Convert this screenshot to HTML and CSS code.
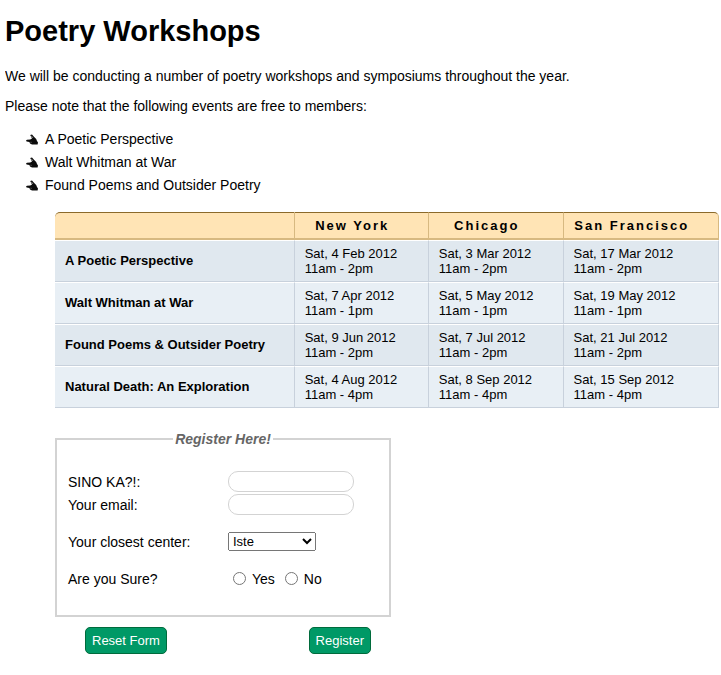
FILE: index.html
```html
<!DOCTYPE html>
<html lang="en">
<head>
<meta charset="utf-8">
<title>Poetry Workshops</title>
<link rel="stylesheet" href="styles.css">
</head>
<body>
<svg class="sprite" aria-hidden="true">
  <symbol id="hand" viewBox="0 0 12 12">
    <path d="M4.2 1 L6 0.6 L8.2 3 L10.2 5 L11 7 L12 8.6 L11.6 10.6 L6 10.4 L4 9.4 L3.4 8 L0.6 7.6 L0 6.6 L1 5.8 L4.2 5.4 L6 4.4 Z" fill="#0c0c0c"/>
    <path d="M5.2 1.8 L7 4" stroke="#999" stroke-width="0.8" fill="none"/>
    <path d="M4.2 8.2 L6 8.4" stroke="#666" stroke-width="0.6" fill="none"/>
  </symbol>
</svg>
<h1>Poetry Workshops</h1>
<p>We will be conducting a number of poetry workshops and symposiums throughout the year.</p>
<p>Please note that the following events are free to members:</p>
<ul class="events">
  <li><svg class="hand" aria-hidden="true"><use href="#hand"/></svg>A Poetic Perspective</li>
  <li><svg class="hand" aria-hidden="true"><use href="#hand"/></svg>Walt Whitman at War</li>
  <li><svg class="hand" aria-hidden="true"><use href="#hand"/></svg>Found Poems and Outsider Poetry</li>
</ul>
<table class="schedule">
  <colgroup><col class="c-name"><col class="c-ny"><col class="c-chi"><col class="c-sf"></colgroup>
  <thead>
    <tr><td></td><th scope="col">New York</th><th scope="col">Chicago</th><th scope="col">San Francisco</th></tr>
  </thead>
  <tbody>
    <tr><th scope="row">A Poetic Perspective</th><td>Sat, 4 Feb 2012<br>11am - 2pm</td><td>Sat, 3 Mar 2012<br>11am - 2pm</td><td>Sat, 17 Mar 2012<br>11am - 2pm</td></tr>
    <tr><th scope="row">Walt Whitman at War</th><td>Sat, 7 Apr 2012<br>11am - 1pm</td><td>Sat, 5 May 2012<br>11am - 1pm</td><td>Sat, 19 May 2012<br>11am - 1pm</td></tr>
    <tr><th scope="row">Found Poems &amp; Outsider Poetry</th><td>Sat, 9 Jun 2012<br>11am - 2pm</td><td>Sat, 7 Jul 2012<br>11am - 2pm</td><td>Sat, 21 Jul 2012<br>11am - 2pm</td></tr>
    <tr><th scope="row">Natural Death: An Exploration</th><td>Sat, 4 Aug 2012<br>11am - 4pm</td><td>Sat, 8 Sep 2012<br>11am - 4pm</td><td>Sat, 15 Sep 2012<br>11am - 4pm</td></tr>
  </tbody>
</table>
<form class="register">
  <fieldset>
    <legend>Register Here!</legend>
    <div class="row"><label for="name">SINO KA?!:</label><input class="text" type="text" id="name"></div>
    <div class="row"><label for="email">Your email:</label><input class="text" type="email" id="email"></div>
    <div class="row spaced"><label for="center">Your closest center:</label><select id="center"><option>Iste</option></select></div>
    <div class="row spaced" role="radiogroup" aria-labelledby="sure"><span id="sure" class="label">Are you Sure?</span><span class="radios"><input type="radio" name="sure" id="yes"><label for="yes">Yes</label><input type="radio" name="sure" id="no"><label for="no">No</label></span></div>
  </fieldset>
  <div class="actions"><button type="reset">Reset Form</button><button type="submit">Register</button></div>
</form>
</body>
</html>
```
FILE: styles.css
```css
body {
  margin: 14px 2px 20px 5px;
  font: 14px/16px "Liberation Sans", Arial, sans-serif;
  color: #000;
  background: #fff;
}
.sprite { display: none; }
h1 { margin: 0 0 20px; font-size: 29px; line-height: 34px; }
p { margin: 0 0 14px; }
.events { list-style: none; margin: 0 0 15px; padding: 0 0 0 21px; }
.events li { display: flex; align-items: center; gap: 7px; line-height: 23px; }
.hand { width: 12px; height: 12px; }
.schedule {
  width: calc(100% - 50px);
  margin-left: 50px;
  table-layout: fixed;
  border-collapse: separate;
  border-spacing: 0;
  font-size: 13px;
  line-height: 15px;
}
.c-name { width: 36.1%; }
.c-ny { width: 20.2%; }
.c-chi { width: 20.3%; }
.schedule tbody td, .schedule tbody th {
  padding: 5px 10px;
  text-align: left;
  border-top: 1px solid #fff;
  border-right: 1px solid #c8d1dc;
  border-bottom: 1px solid #c8d1dc;
}
.schedule tbody th { padding: 5px 10px 7px; }
.schedule tbody tr { background: #e8eff5; }
.schedule tbody tr:nth-child(odd) { background: #e0e8ef; }
.schedule thead td, .schedule thead th {
  padding: 3px 24px 2px 6px;
  background: #ffe4b5;
  border-top: 1px solid #8b6a2b;
  border-right: 1px solid #d7b981;
  border-bottom: 2px solid #d7b981;
  letter-spacing: 2px;
  line-height: 20px;
  white-space: nowrap;
}
.schedule thead td:first-child { border-top-left-radius: 5px; }
.schedule thead th:last-child { border-top-right-radius: 5px; }
.register { width: 336px; margin: 23px 0 0 50px; }
fieldset {
  margin: 0;
  padding: 23px 11px 25px;
  border: 2px solid #d3d3d3;
}
legend {
  margin: 0 auto;
  padding: 0 2px;
  font-weight: bold;
  font-style: italic;
  color: #666;
}
.row { display: flex; align-items: center; height: 23px; }
.row > label, .row > .label { width: 160px; }
.spaced { margin-top: 14px; }
.text {
  box-sizing: border-box;
  width: 126px;
  height: 21px;
  border: 1px solid #d3d3d3;
  border-radius: 10px;
  padding: 1px 8px;
}
select {
  width: 88px;
  height: 19px;
  font: 13px "Liberation Sans", Arial, sans-serif;
}
.radios { display: flex; align-items: center; }
.radios input { width: 13px; height: 13px; margin: 0 6px 0 5px; }
.radios label + input { margin-left: 10px; }
.actions { display: flex; justify-content: space-between; padding: 0 20px 0 30px; margin-top: 10px; }
button {
  height: 27px;
  padding: 0 6px;
  font: 13px "Liberation Sans", Arial, sans-serif;
  color: #fff;
  background: #009966;
  border: 1px solid #006b3c;
  border-radius: 5px;
}
```
